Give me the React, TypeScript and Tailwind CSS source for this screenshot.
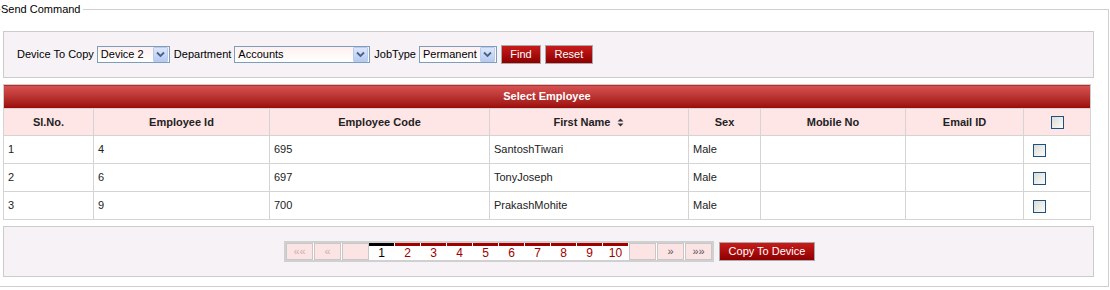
import React from 'react'

// Employee rows shown in the "Select Employee" grid
const employees = [
  { sl: 1, id: 4, code: 695, name: 'SantoshTiwari', sex: 'Male' },
  { sl: 2, id: 6, code: 697, name: 'TonyJoseph', sex: 'Male' },
  { sl: 3, id: 9, code: 700, name: 'PrakashMohite', sex: 'Male' },
]

const columns = [
  { label: 'Sl.No.', w: 'w-[90px]' },
  { label: 'Employee Id', w: 'w-[176px]' },
  { label: 'Employee Code', w: 'w-[220px]' },
  { label: 'First Name', w: 'w-[199px]', sortable: true },
  { label: 'Sex', w: 'w-[72px]' },
  { label: 'Mobile No', w: 'w-[145px]' },
  { label: 'Email ID', w: 'w-[118px]' },
]

function Checkbox() {
  return (
    <span className="inline-block w-[13px] h-[13px] border border-[#1c5180] bg-gradient-to-br from-[#dcdcd6] to-[#fbfbf9] align-middle" />
  )
}

function SelectBox({ value, width }: { value: string; width: string }) {
  return (
    <div className={`flex items-center h-[17px] border border-[#7f9db9] bg-gradient-to-b from-[#fff0f0] to-white ${width}`}>
      <span className="flex-1 pl-[3px] leading-[15px] text-black">{value}</span>
      <span className="w-[15px] h-[15px] mr-[1px] flex items-center justify-center bg-gradient-to-b from-[#dbe6fb] to-[#b5cbf3] border border-[#b9ccf0] rounded-[1px]">
        <svg width="9" height="7" viewBox="0 0 9 7">
          <path d="M1 1.5 L4.5 5 L8 1.5" fill="none" stroke="#4d6185" strokeWidth="1.8" />
        </svg>
      </span>
    </div>
  )
}

function RedButton({ label, width }: { label: string; width: string }) {
  return (
    <button className={`h-[19px] ${width} border border-[#a9a9a9] bg-gradient-to-b from-[#c81b1b] to-[#8e0000] text-white text-[11px] leading-[17px] text-center`}>
      {label}
    </button>
  )
}

function SortIcon() {
  return (
    <svg width="7" height="9" viewBox="0 0 7 9" className="inline-block ml-[7px] align-middle">
      <path d="M3.5 0.5 L6.5 3.5 L0.5 3.5 Z" fill="#333" />
      <path d="M3.5 8.5 L6.5 5.5 L0.5 5.5 Z" fill="#333" />
    </svg>
  )
}

export default function App() {
  const pages = [1, 2, 3, 4, 5, 6, 7, 8, 9, 10]

  return (
    <div className="w-[1110px] h-[290px] bg-white text-[11px] text-[#222] font-['Liberation_Sans',Arial,sans-serif] overflow-hidden">
      <fieldset className="w-[1108px] h-[284px] mt-[3px] border border-l-0 border-[#d0d0d0] pr-[14px]">
        <legend className="ml-[1px] pr-[2px] text-[11px] leading-[13px] text-black">Send Command</legend>

        {/* Filter panel */}
        <div className="mt-[15px] ml-[3px] w-[1091px] h-[47px] border border-[#cccccc] bg-[#f6f2f6] flex items-center pl-[13px] gap-[3px] text-black">
          <span>Device To Copy</span>
          <SelectBox value="Device 2" width="w-[73px]" />
          <span className="ml-[1px]">Department</span>
          <SelectBox value="Accounts" width="w-[136px]" />
          <span className="ml-[1px]">JobType</span>
          <SelectBox value="Permanent" width="w-[78px]" />
          <span className="ml-[1px]"><RedButton label="Find" width="w-[40px]" /></span>
          <span className="ml-[1px]"><RedButton label="Reset" width="w-[48px]" /></span>
        </div>

        {/* Employee grid */}
        <table className="mt-[6px] ml-[3px] w-[1088px] border-collapse border border-[#cccccc] table-fixed">
          <colgroup>
            {columns.map(c => (
              <col key={c.label} className={c.w} />
            ))}
            <col />
          </colgroup>
          <thead>
            <tr>
              <th colSpan={8} className="h-[24px] bg-gradient-to-b from-[#d75252] to-[#9a0505] text-white font-bold text-[11px] text-center">
                Select Employee
              </th>
            </tr>
            <tr className="bg-[#ffe6e6]">
              {columns.map(c => (
                <th key={c.label} className="h-[27px] border border-[#d4d4d4] font-bold text-[#222] text-center">
                  {c.label}
                  {c.sortable && <SortIcon />}
                </th>
              ))}
              <th className="border border-[#d4d4d4] text-center">
                <Checkbox />
              </th>
            </tr>
          </thead>
          <tbody>
            {employees.map(e => (
              <tr key={e.sl} className="h-[28px] bg-white">
                <td className="border border-[#d4d4d4] pl-[4px]">{e.sl}</td>
                <td className="border border-[#d4d4d4] pl-[4px]">{e.id}</td>
                <td className="border border-[#d4d4d4] pl-[4px]">{e.code}</td>
                <td className="border border-[#d4d4d4] pl-[4px]">{e.name}</td>
                <td className="border border-[#d4d4d4] pl-[4px]">{e.sex}</td>
                <td className="border border-[#d4d4d4]"></td>
                <td className="border border-[#d4d4d4]"></td>
                <td className="border border-[#d4d4d4] pl-[9px]">
                  <Checkbox />
                </td>
              </tr>
            ))}
          </tbody>
        </table>

        {/* Pager panel */}
        <div className="mt-[6px] ml-[3px] w-[1091px] h-[51px] border border-[#cccccc] bg-[#f6f2f6] flex items-center justify-center pl-[2px]">
          <div className="flex items-stretch border-2 border-[#d0d0d0] bg-white h-[21px]">
            <span className="w-[27px] border border-[#c8c8c8] bg-[#fde4e4] text-[#c9b0b0] text-center leading-[15px]">««</span>
            <span className="w-[27px] ml-[1px] border border-[#c8c8c8] bg-[#fde4e4] text-[#c9b0b0] text-center leading-[15px]">«</span>
            <span className="w-[27px] ml-[1px] border border-[#c8c8c8] bg-[#fde4e4]"></span>
            {pages.map(p => (
              <span
                key={p}
                className={`w-[25px] mr-[1px] border-t-[3px] text-center text-[12px] leading-[15px] ${p === 1 ? 'border-black text-black' : 'border-[#a00000] text-[#a00000]'}`}
              >
                {p}
              </span>
            ))}
            <span className="w-[27px] border border-[#c8c8c8] bg-[#fde4e4]"></span>
            <span className="w-[27px] ml-[1px] border border-[#c8c8c8] bg-[#fde4e4] text-[#555] text-center leading-[15px]">»</span>
            <span className="w-[27px] ml-[1px] border border-[#c8c8c8] bg-[#fde4e4] text-[#555] text-center leading-[15px]">»»</span>
          </div>
          <button className="ml-[5px] h-[19px] w-[96px] border border-[#a9a9a9] bg-gradient-to-b from-[#c81b1b] to-[#8e0000] text-white text-[11px] leading-[17px]">
            Copy To Device
          </button>
        </div>
      </fieldset>
    </div>
  )
}
